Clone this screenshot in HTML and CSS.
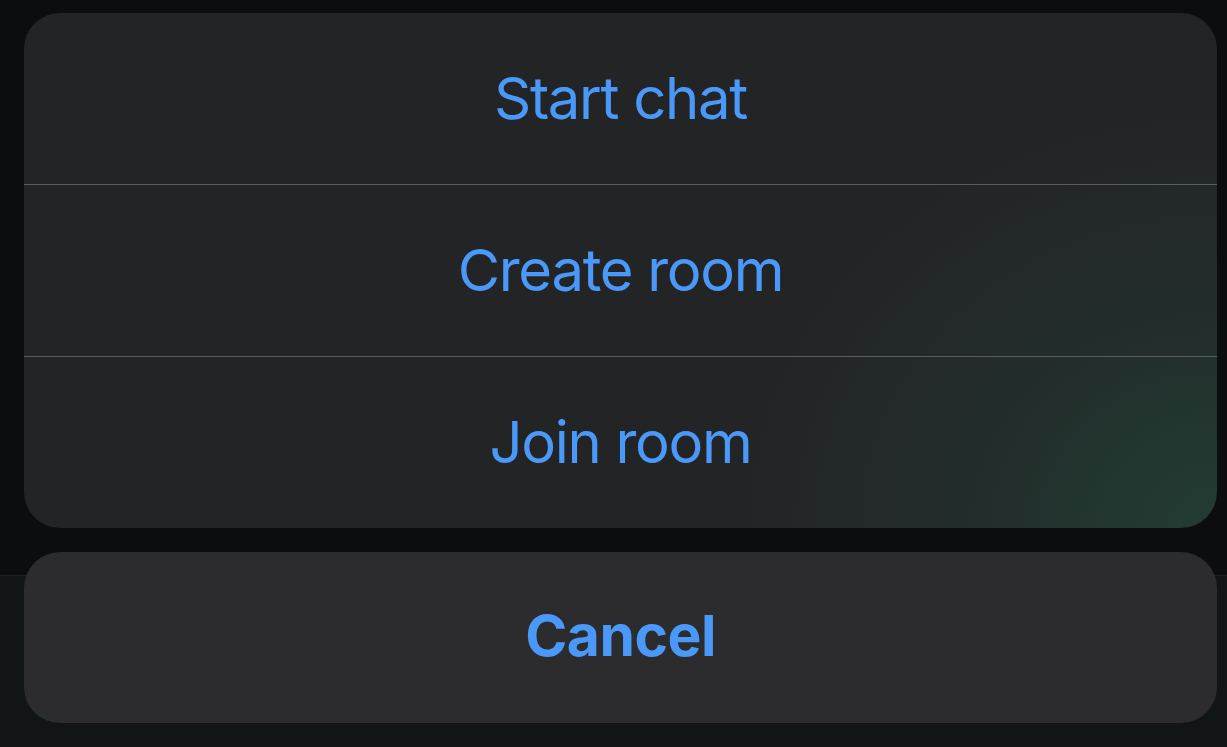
FILE: index.html
```html
<!DOCTYPE html>
<html lang="en">
<head>
<meta charset="utf-8">
<title>Action sheet</title>
<link rel="stylesheet" href="styles.css">
</head>
<body>
<div class="screen">
  <div class="backdrop-bottom"></div>
  <div class="sheet">
    <div class="group">
      <button class="action">Start chat</button>
      <button class="action">Create room</button>
      <button class="action">Join room</button>
    </div>
    <div class="cancel-group">
      <button class="action cancel">Cancel</button>
    </div>
  </div>
</div>
</body>
</html>
```
FILE: styles.css
```css
html, body {
  margin: 0;
  padding: 0;
  background: #0c0d0f;
}
.screen {
  position: relative;
  width: 1227px;
  height: 747px;
  overflow: hidden;
  background: #0c0d0f;
  font-family: Inter, "Liberation Sans", sans-serif;
}
.backdrop-bottom {
  position: absolute;
  left: 0;
  right: 0;
  top: 575px;
  bottom: 0;
  background: #111518;
  border-top: 1px solid #1c2024;
}
.sheet {
  position: relative;
  display: flex;
  flex-direction: column;
  gap: 24px;
  padding: 13px 10px 0 24px;
}
.group {
  display: flex;
  flex-direction: column;
  border-radius: 36px;
  overflow: hidden;
  background:
    radial-gradient(ellipse 480px 420px at 100% 100%, rgba(34, 62, 52, 0.95) 0%, rgba(34, 58, 50, 0.5) 45%, rgba(35, 36, 38, 0) 100%),
    #232426;
}
.action {
  display: flex;
  align-items: center;
  justify-content: center;
  box-sizing: content-box;
  height: 171px;
  border: 0;
  margin: 0;
  padding: 0 0 2px 0;
  background: transparent;
  color: #4a98f7;
  font-family: Inter, "Liberation Sans", sans-serif;
  font-size: 58px;
  font-weight: 400;
  letter-spacing: -1.3px;
}
.action:not(.cancel) {
  height: 169px;
}
.group .action + .action {
  border-top: 1px solid #5b5c5f;
}
.cancel-group {
  border-radius: 36px;
  overflow: hidden;
  background: #2c2c2e;
}
.cancel {
  width: 100%;
  height: 167px;
  padding: 0 0 4px 0;
  font-weight: 700;
  font-size: 57px;
  letter-spacing: -0.5px;
}
```
